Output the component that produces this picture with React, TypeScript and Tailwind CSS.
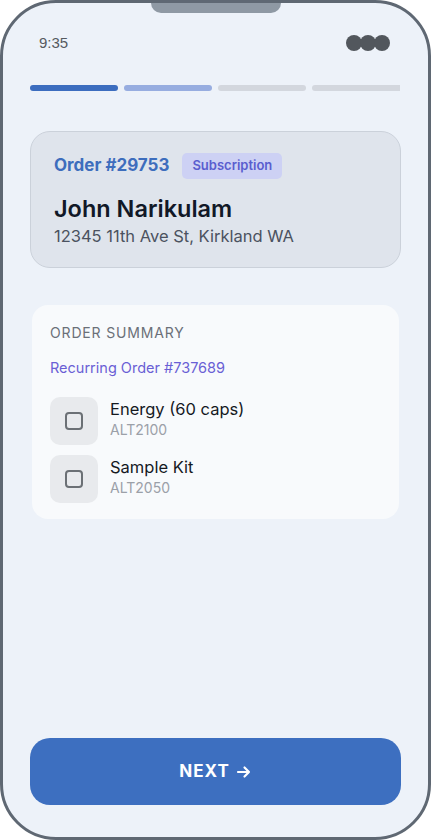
import React from 'react';

const font = { fontFamily: 'Inter, "Noto Sans", sans-serif' };

const BoxIcon = () => (
  <svg width="20" height="20" viewBox="0 0 20 20" fill="none">
    <rect x="2" y="2" width="16" height="16" rx="3" stroke="#6b7075" strokeWidth="2" />
  </svg>
);

const items = [
  { name: 'Energy (60 caps)', sku: 'ALT2100' },
  { name: 'Sample Kit', sku: 'ALT2050' },
];

export default function App() {
  return (
    <div className="w-[431px] h-[840px] bg-white" style={font}>
      <div className="relative flex flex-col h-full rounded-[56px] border-[3px] border-[#5f6873] bg-[#edf2f9] overflow-hidden">
        {/* notch */}
        <div className="absolute left-[148px] top-0 w-[130px] h-[10px] rounded-b-[10px] bg-[#8f99a4]" />

        {/* status bar */}
        <div className="flex items-center justify-between pl-[36px] pr-[38px] pt-[28px] h-[52px]">
          <span className="text-[15px] text-[#555a60]" style={{ fontFamily: '"Liberation Sans", sans-serif' }}>9:35</span>
          <div className="flex -space-x-[2px]">
            <span className="w-[16px] h-[16px] rounded-full bg-[#52575d]" />
            <span className="w-[16px] h-[16px] rounded-full bg-[#52575d]" />
            <span className="w-[16px] h-[16px] rounded-full bg-[#52575d]" />
          </div>
        </div>

        {/* progress */}
        <div className="flex gap-[6px] pl-[27px] w-[397px] mt-[30px] overflow-hidden">
          <div className="w-[88px] h-[6px] shrink-0 rounded-full bg-[#3c6dbf]" />
          <div className="w-[88px] h-[6px] shrink-0 rounded-full bg-[#97ade0]" />
          <div className="w-[88px] h-[6px] shrink-0 rounded-full bg-[#d3d7de]" />
          <div className="w-[88px] h-[6px] shrink-0 rounded-l-full bg-[#d3d7de]" />
        </div>

        {/* customer card */}
        <div className="mx-[27px] mt-[40px] h-[137px] rounded-[20px] border border-[#cbd1da] bg-[#dfe4ec] px-[23px] pt-[21px]">
          <div className="flex items-center gap-[13px]">
            <span className="text-[17px] font-bold text-[#3d6dbd]">Order #29753</span>
            <span className="rounded-[5px] bg-[#cdd1f4] px-[10px] py-[3px] text-[13px] font-semibold text-[#5a5ecf]">Subscription</span>
          </div>
          <div className="mt-[15px] text-[23.5px] font-semibold text-[#111827] leading-[30px]">John Narikulam</div>
          <div className="mt-[1px] text-[16.5px] text-[#4b5260] leading-[22px]">12345 11th Ave St, Kirkland WA</div>
        </div>

        {/* summary */}
        <div className="mx-[29px] mt-[37px] rounded-[16px] bg-[#f8fafc] px-[18px] pt-[17px] pb-[16px]">
          <div className="text-[14px] tracking-[0.06em] text-[#6b7078]">ORDER SUMMARY</div>
          <div className="mt-[14px] text-[14.5px] text-[#6a5fd5]">Recurring Order #737689</div>
          <div className="mt-[18px] flex flex-col gap-[10px]">
            {items.map((it) => (
              <div key={it.sku} className="flex items-center gap-[12px]">
                <div className="w-[48px] h-[48px] rounded-[10px] bg-[#e8eaed] flex items-center justify-center">
                  <BoxIcon />
                </div>
                <div className="flex flex-col -mt-[4px]">
                  <span className="text-[16.5px] text-[#15191f] leading-[22px]">{it.name}</span>
                  <span className="text-[14px] text-[#9ba0a8] leading-[20px]">{it.sku}</span>
                </div>
              </div>
            ))}
          </div>
        </div>

        <div className="flex-1" />

        {/* button */}
        <div className="px-[27px] pb-[32px]">
          <button className="w-full h-[67px] rounded-[20px] bg-[#3d6fc0] text-white text-[17px] font-bold tracking-[0.06em] flex items-center justify-center gap-[6px]">
            NEXT
            <svg width="16" height="16" viewBox="0 0 16 16" fill="none">
              <path d="M2 8h11M8.5 3.5 13 8l-4.5 4.5" stroke="white" strokeWidth="2.2" strokeLinecap="round" strokeLinejoin="round" />
            </svg>
          </button>
        </div>
      </div>
    </div>
  );
}
